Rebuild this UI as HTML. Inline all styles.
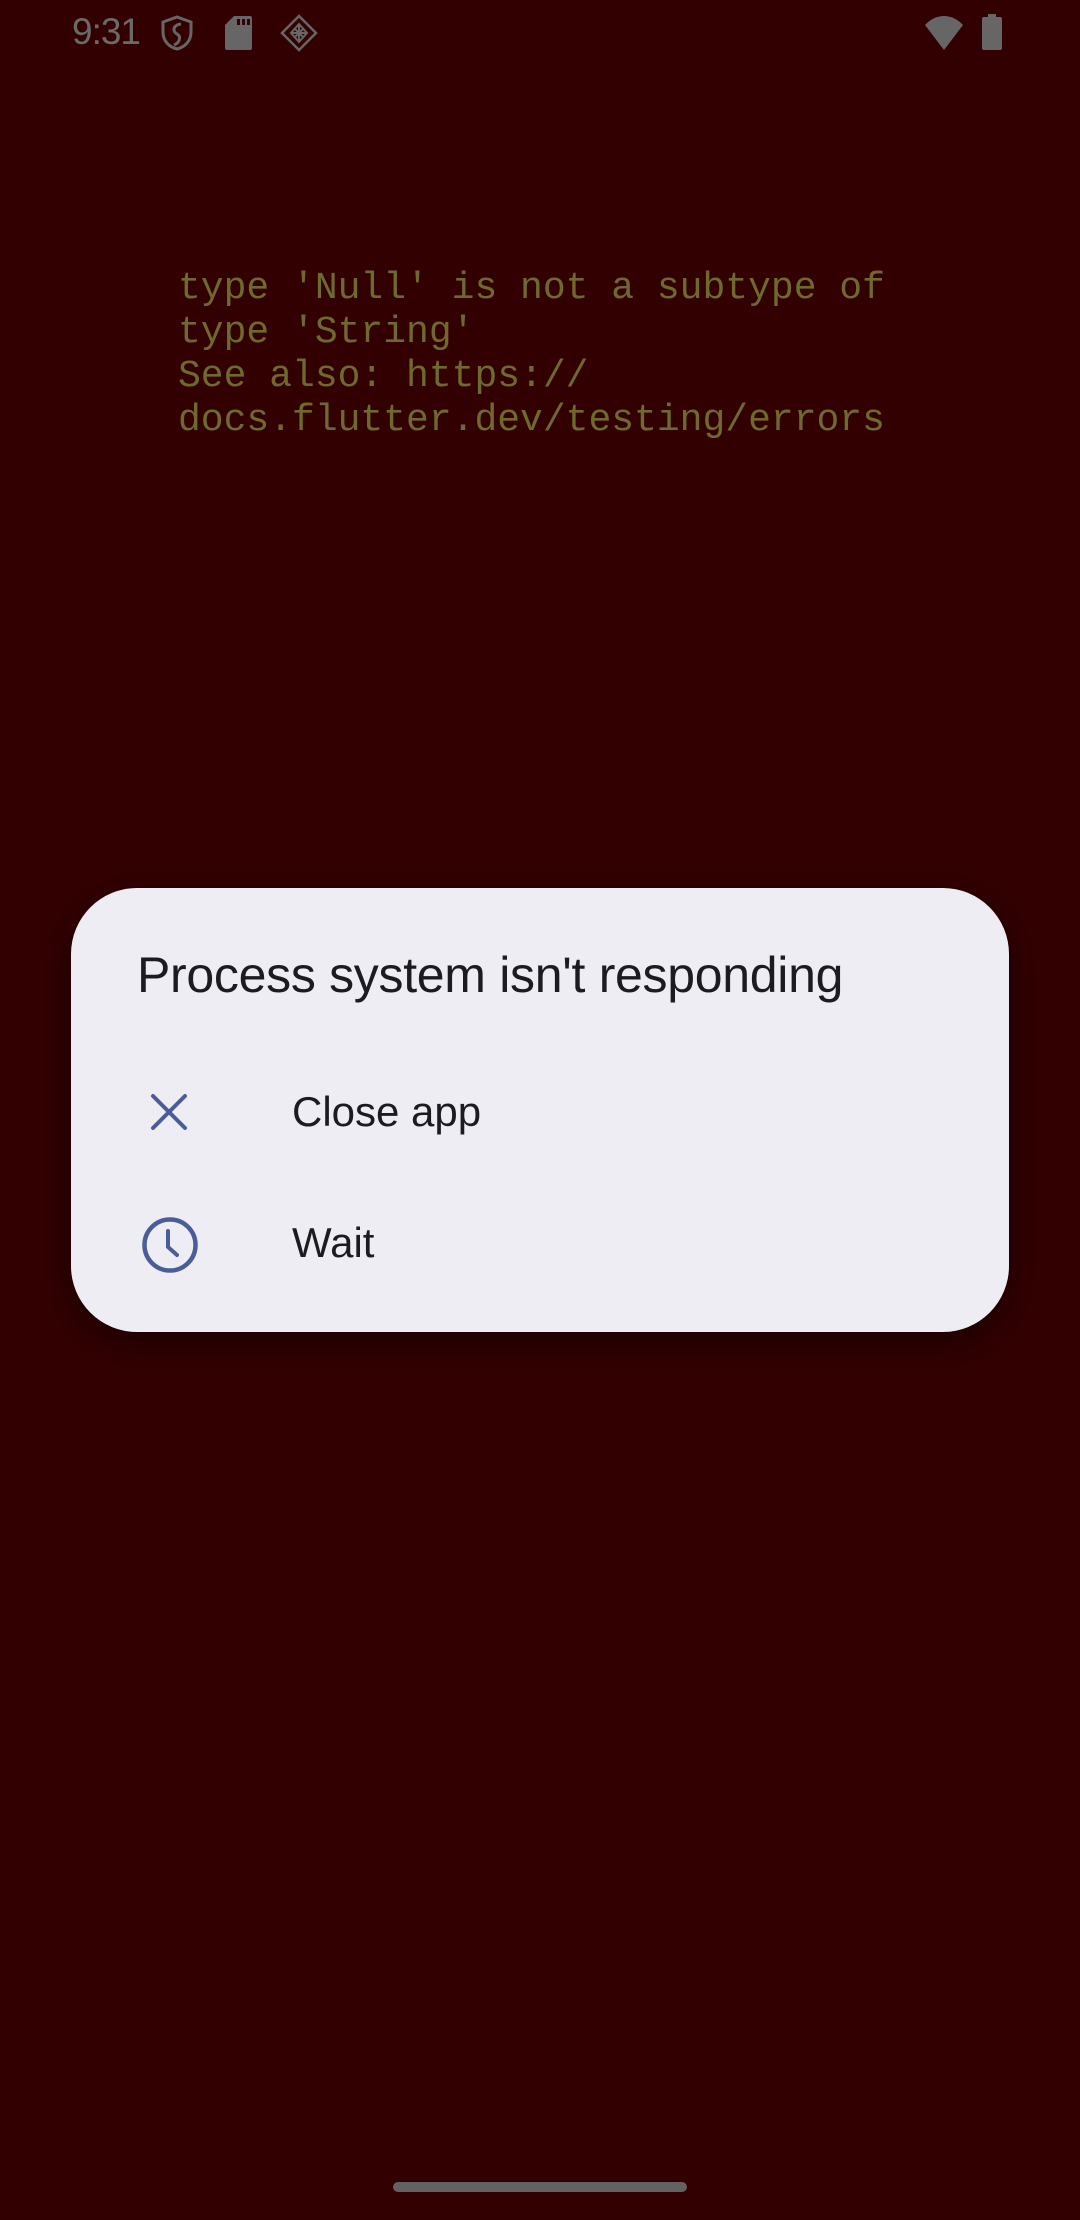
<!DOCTYPE html>
<html><head><meta charset="utf-8"><style>
html,body{margin:0;padding:0}
body{width:1080px;height:2220px;background:#330002;position:relative;overflow:hidden;font-family:"Liberation Sans",sans-serif}
.abs{position:absolute}
.time{left:72px;top:11px;font-size:37px;color:#6a6a6a;letter-spacing:-1px}
.err{left:178px;top:267px;font-family:"Liberation Mono",monospace;font-size:38px;line-height:44px;color:#6e6a2c;white-space:pre}
.dlg{left:71px;top:888px;width:938px;height:444px;background:#eeedf3;border-radius:66px;box-shadow:0 10px 40px rgba(0,0,0,0.5)}
.title{left:137px;top:946px;font-size:50px;color:#1c1b1f;white-space:nowrap;letter-spacing:-0.3px}
.item{font-size:42px;color:#1c1b1f;left:292px;white-space:nowrap}
.bar{left:393px;top:2182px;width:294px;height:10px;border-radius:5px;background:#626262}
</style></head><body>
<div class="abs time">9:31</div>
<svg class="abs" style="left:160px;top:15px" width="34" height="36" viewBox="0 0 34 36"><path d="M17 2 L31 7 V17 C31 26 25 32 17 34 C9 32 3 26 3 17 V7 Z" fill="none" stroke="#666" stroke-width="3"/><path d="M21 9 C13 10 12 16 17 19 C22 22 19 28 14 30" fill="none" stroke="#666" stroke-width="3"/></svg>
<svg class="abs" style="left:225px;top:16px" width="27" height="34" viewBox="0 0 27 34"><path d="M9 0 H25 a2 2 0 0 1 2 2 V32 a2 2 0 0 1 -2 2 H2 a2 2 0 0 1 -2 -2 V9 Z" fill="#666"/><rect x="12" y="3" width="3" height="6" fill="#330002"/><rect x="17" y="3" width="3" height="6" fill="#330002"/><rect x="22" y="3" width="3" height="6" fill="#330002"/></svg>
<svg class="abs" style="left:280px;top:14px" width="38" height="38" viewBox="0 0 38 38"><path d="M19 2 L36 19 L19 36 L2 19 Z" fill="none" stroke="#666" stroke-width="2.5"/><path d="M19 10 L27 19 L19 28 L11 19 Z M11 19 H27 M19 10 V28 M14 14 L24 24 M24 14 L14 24" fill="none" stroke="#666" stroke-width="2"/></svg>
<svg class="abs" style="left:924px;top:15px" width="40" height="35" viewBox="0 0 40 35"><path d="M20 35 L1 10 C12 -2 28 -2 39 10 Z" fill="#666"/></svg>
<svg class="abs" style="left:982px;top:14px" width="20" height="36" viewBox="0 0 20 36"><rect x="6" y="0" width="8" height="4" fill="#666"/><rect x="0" y="3" width="20" height="33" rx="2" fill="#666"/></svg>
<div class="abs err">type 'Null' is not a subtype of
type 'String'
See also: https://
docs.flutter.dev/testing/errors</div>
<div class="abs dlg"></div>
<div class="abs title">Process system isn't responding</div>
<svg class="abs" style="left:150px;top:1093px" width="38" height="38" viewBox="0 0 38 38"><path d="M3 3 L35 35 M35 3 L3 35" stroke="#4a5d98" stroke-width="4" stroke-linecap="round"/></svg>
<div class="abs item" style="top:1088px">Close app</div>
<svg class="abs" style="left:141px;top:1216px" width="58" height="58" viewBox="0 0 58 58"><circle cx="29" cy="29" r="25.5" fill="none" stroke="#4a5d98" stroke-width="4.5"/><path d="M27 15 V31 L36 39" fill="none" stroke="#4a5d98" stroke-width="4" stroke-linecap="round"/></svg>
<div class="abs item" style="top:1219px">Wait</div>
<div class="abs bar"></div>
</body></html>
